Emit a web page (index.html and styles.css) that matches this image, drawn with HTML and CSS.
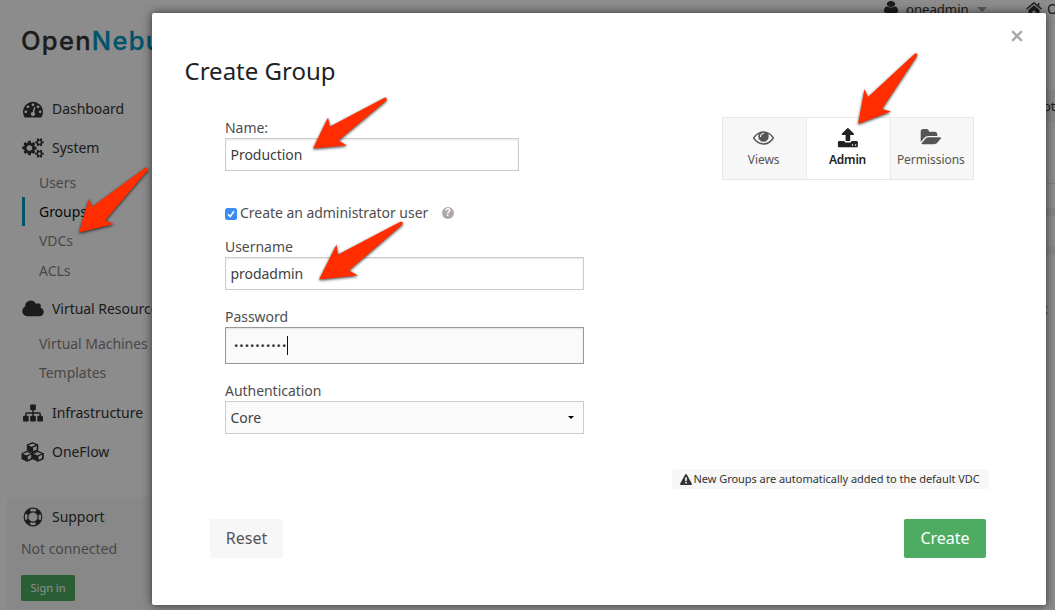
FILE: index.html
```html
<!DOCTYPE html>
<html lang="en">
<head>
<meta charset="utf-8">
<title>OpenNebula Sunstone</title>
<link rel="stylesheet" href="styles.css">
</head>
<body>
<div class="app">
  <aside class="sidebar">
    <div class="logo">Open<span class="logo-accent">Nebula</span></div>
    <nav class="nav">
      <a class="nav-item"><svg class="nav-icon" viewBox="0 0 1792 1792"><path d="M384 1152q0-53-37.5-90.5t-90.5-37.5-90.5 37.5-37.5 90.5 37.5 90.5 90.5 37.5 90.5-37.5 37.5-90.5zm192-448q0-53-37.5-90.5t-90.5-37.5-90.5 37.5-37.5 90.5 37.5 90.5 90.5 37.5 90.5-37.5 37.5-90.5zm428 481l101-382q6-26-7.5-48.5t-38.5-29.5-48 6.5-30 39.5l-101 382q-60 5-107 43.5t-63 98.5q-20 77 20 146t117 89 146-20 89-117q16-60-6-117t-72-91zm660-33q0-53-37.5-90.5t-90.5-37.5-90.5 37.5-37.5 90.5 37.5 90.5 90.5 37.5 90.5-37.5 37.5-90.5zm-640-640q0-53-37.5-90.5t-90.5-37.5-90.5 37.5-37.5 90.5 37.5 90.5 90.5 37.5 90.5-37.5 37.5-90.5zm448 192q0-53-37.5-90.5t-90.5-37.5-90.5 37.5-37.5 90.5 37.5 90.5 90.5 37.5 90.5-37.5 37.5-90.5zm320 448q0 261-141 483-19 29-54 29h-1402q-35 0-54-29-141-221-141-483 0-182 71-348t191-286 286-191 348-71 348 71 286 191 191 286 71 348z"/></svg>Dashboard</a>
      <a class="nav-item"><svg class="nav-icon" viewBox="0 0 1920 1792"><path d="M896 896q0-106-75-181t-181-75-181 75-75 181 75 181 181 75 181-75 75-181zm768 512q0-52-38-90t-90-38-90 38-38 90q0 53 37.5 90.5t90.5 37.5 90.5-37.5 37.5-90.5zm0-1024q0-52-38-90t-90-38-90 38-38 90q0 53 37.5 90.5t90.5 37.5 90.5-37.5 37.5-90.5zm-384 421v185q0 10-7 19.5t-16 10.5l-155 24q-11 35-32 76 34 48 90 115 7 11 7 20 0 12-7 19-23 30-82.5 89.5t-78.5 59.5q-11 0-21-7l-115-90q-37 19-77 31-11 108-23 155-7 24-30 24h-186q-11 0-20-7.5t-10-17.5l-23-153q-34-10-75-31l-118 89q-7 7-20 7-11 0-21-8-144-133-144-160 0-9 7-19 10-14 41-53t47-61q-23-44-35-82l-152-24q-10-1-17-9.5t-7-19.5v-185q0-10 7-19.5t16-10.5l155-24q11-35 32-76-34-48-90-115-7-11-7-20 0-12 7-20 22-30 82-89t79-59q11 0 21 7l115 90q34-18 77-32 11-108 23-154 7-24 30-24h186q11 0 20 7.5t10 17.5l23 153q34 10 75 31l118-89q8-7 20-7 11 0 21 8 144 133 144 160 0 8-7 19-12 16-42 54t-45 60q23 48 34 82l152 23q10 2 17 10.5t7 19.5zm640 533v140q0 16-149 31-12 27-30 52 51 113 51 138 0 4-4 7-122 71-124 71-8 0-46-47t-52-68q-20 2-30 2t-30-2q-14 21-52 68t-46 47q-2 0-124-71-4-3-4-7 0-25 51-138-18-25-30-52-149-15-149-31v-140q0-16 149-31 13-29 30-52-51-113-51-138 0-4 4-7 4-2 35-20t59-34 30-16q8 0 46 46.5t52 67.5q20-2 30-2t30 2q51-71 92-112l6-2q4 0 124 70 4 3 4 7 0 25-51 138 17 23 30 52 149 15 149 31zm0-1024v140q0 16-149 31-12 27-30 52 51 113 51 138 0 4-4 7-122 71-124 71-8 0-46-47t-52-68q-20 2-30 2t-30-2q-14 21-52 68t-46 47q-2 0-124-71-4-3-4-7 0-25 51-138-18-25-30-52-149-15-149-31v-140q0-16 149-31 13-29 30-52-51-113-51-138 0-4 4-7 4-2 35-20t59-34 30-16q8 0 46 46.5t52 67.5q20-2 30-2t30 2q51-71 92-112l6-2q4 0 124 70 4 3 4 7 0 25-51 138 17 23 30 52 149 15 149 31z"/></svg>System</a>
      <div class="subnav">
        <a class="sub-item">Users</a>
        <a class="sub-item active">Groups</a>
        <a class="sub-item">VDCs</a>
        <a class="sub-item">ACLs</a>
      </div>
      <a class="nav-item"><svg class="nav-icon" viewBox="64 0 1920 1792"><path d="M1984 1152q0 159-112.5 271.5t-271.5 112.5h-1088q-185 0-316.5-131.5t-131.5-316.5q0-132 71-241.5t187-163.5q-2-28-2-43 0-212 150-362t362-150q158 0 286.5 88t187.5 230q70-62 166-62 106 0 181 75t75 181q0 75-41 138 129 30 213 134.5t84 239.5z"/></svg>Virtual Resources</a>
      <div class="subnav last">
        <a class="sub-item">Virtual Machines</a>
        <a class="sub-item">Templates</a>
      </div>
      <a class="nav-item"><svg class="nav-icon" viewBox="0 0 1792 1792"><path d="M1792 1248v320q0 40-28 68t-68 28h-320q-40 0-68-28t-28-68v-320q0-40 28-68t68-28h96v-192h-512v192h96q40 0 68 28t28 68v320q0 40-28 68t-68 28h-320q-40 0-68-28t-28-68v-320q0-40 28-68t68-28h96v-192h-512v192h96q40 0 68 28t28 68v320q0 40-28 68t-68 28h-320q-40 0-68-28t-28-68v-320q0-40 28-68t68-28h96v-192q0-52 38-90t90-38h512v-192h-96q-40 0-68-28t-28-68v-320q0-40 28-68t68-28h320q40 0 68 28t28 68v320q0 40-28 68t-68 28h-96v192h512q52 0 90 38t38 90v192h96q40 0 68 28t28 68z"/></svg>Infrastructure</a>
      <a class="nav-item"><svg class="nav-icon cubes" viewBox="0 0 23 20"><g id="cube"><path d="M11.500 .8l5 2.100v5.100l-5 2.400-5-2.400V2.900z" class="cube-face"/><path d="M11.500 5.200l5-2.300v5.100l-5 2.400z" class="cube-face"/><path d="M6.500 2.900l5 2.300v5l-5-2.200z"/></g><use href="#cube" x="-5.400" y="8.600"/><use href="#cube" x="5.400" y="8.600"/></svg>OneFlow</a>
    </nav>
    <section class="support">
      <a class="nav-item"><svg class="nav-icon" viewBox="0 0 20 20"><circle cx="10" cy="10" r="8.800" class="ring"/><circle cx="10" cy="10" r="5.200" class="ring"/><circle cx="10" cy="10" r="7" class="ring-fill"/></svg>Support</a>
      <p class="support-status">Not connected</p>
      <button class="signin">Sign in</button>
    </section>
  </aside>
  <main class="content">
    <header class="topbar">
      <svg class="user-icon" viewBox="256 128 1280 1536" preserveAspectRatio="none"><path d="M1536 1399q0 109-62.500 187t-150.500 78h-854q-88 0-150.500-78t-62.500-187q0-85 8.500-160.500t31.500-152 58.500-131 94-89 134.500-34.500q131 128 313 128t313-128q76 0 134.500 34.500t94 89 58.500 131 31.500 152 8.500 160.500zm-256-887q0 159-112.500 271.500t-271.500 112.500-271.500-112.500-112.500-271.500 112.500-271.500 271.500-112.500 271.500 112.500 112.500 271.500z"/></svg>
      <span class="user-name">oneadmin</span>
      <span class="user-caret"></span>
      <svg class="home-icon" viewBox="0 0 16 13"><path d="M8 3.300l5.500 4.700v4.300h-4V8.800h-3v3.500h-4V8z"/><path d="M.6 7L8 .9 15.400 7M12.600 1v3" class="roof"/></svg>
      <span>O</span>
    </header>
    <div class="table-head">ot</div>
    <div class="rule"></div>
    <div class="band"></div>
    <div class="band"></div>
    <div class="more">:</div>
  </main>
</div>
<div class="scrim"></div>

<div class="modal">
  <svg class="close" viewBox="0 0 12 12"><path d="M1.200 1.200l9.600 9.600M10.800 1.200L1.200 10.800"/></svg>
  <h1 class="title">Create Group</h1>
  <div class="top-row">
    <label class="field name-field">Name:<input type="text" value="Production"></label>
    <div class="tabs">
      <a class="tab"><svg viewBox="0 128 1792 1664"><path d="M1664 960q-152-236-381-353 61 104 61 225 0 185-131.500 316.500t-316.500 131.500-316.500-131.500-131.500-316.500q0-121 61-225-229 117-381 353 133 205 333.500 326.500t434.500 121.500 434.500-121.500 333.500-326.500zm-720-384q0-20-14-34t-34-14q-125 0-214.500 89.500t-89.500 214.500q0 20 14 34t34 14 34-14 14-34q0-86 61-147t147-61q20 0 34-14t14-34zm848 384q0 34-20 69-140 230-376.500 368.500t-499.500 138.500-499.500-139-376.500-368q-20-35-20-69t20-69q140-229 376.500-368t499.500-139 499.500 139 376.500 368q20 35 20 69z"/></svg>Views</a>
      <a class="tab current"><svg viewBox="0 64 1728 1664"><path d="M1344 1472q0-26-19-45t-45-19-45 19-19 45 19 45 45 19 45-19 19-45zm256 0q0-26-19-45t-45-19-45 19-19 45 19 45 45 19 45-19 19-45zm128-224v320q0 40-28 68t-68 28h-1472q-40 0-68-28t-28-68v-320q0-40 28-68t68-28h427q21 56 70.500 92t110.500 36h256q61 0 110.500-36t70.500-92h427q40 0 68 28t28 68zm-325-648q-17 40-59 40h-256v448q0 26-19 45t-45 19h-256q-26 0-45-19t-19-45v-448h-256q-42 0-59-40-17-39 14-69l448-448q18-19 45-19t45 19l448 448q31 30 14 69z"/></svg>Admin</a>
      <a class="tab"><svg viewBox="0 128 1943 1664"><path d="M1943 952q0 31-31 66l-336 396q-43 51-120.500 86.500t-143.500 35.500h-1088q-34 0-60.500-13t-26.500-43q0-31 31-66l336-396q43-51 120.500-86.500t143.500-35.500h1088q34 0 60.500 13t26.500 43zm-343-344v160h-832q-94 0-197 47.500t-164 119.500l-337 396-5 6q0-4-.5-12.500t-.5-12.500v-960q0-92 66-158t158-66h320q92 0 158 66t66 158v32h544q92 0 158 66t66 158z"/></svg>Permissions</a>
    </div>
  </div>
  <div class="form">
    <div class="check-row">
      <svg class="checkbox" viewBox="0 0 12 12"><rect width="12" height="12" rx="2.500"/><path d="M3 6.200l2.200 2.400L9 3.200"/></svg>
      <span>Create an administrator user</span><span class="help">?</span>
    </div>
    <label class="field">Username<input type="text" value="prodadmin"></label>
    <div class="field password">Password<div class="password-box"><span>••••••••••</span><i class="text-caret"></i></div></div>
    <div class="field auth">Authentication<div class="select">Core<span class="select-caret"></span></div></div>
  </div>
  <div class="notice"><svg viewBox="0 0 12 11"><path fill-rule="evenodd" d="M5.200.6q.8-1 1.600 0l5 9q.4 1.200-.8 1.300H1q-1.200-.1-.8-1.300zM5 3.400l.3 3.800h1.400L7 3.400zm.2 4.600v1.500h1.600V8z"/></svg>New Groups are automatically added to the default VDC</div>
  <div class="actions">
    <button class="btn">Reset</button>
    <button class="btn primary">Create</button>
  </div>
</div>

<svg class="arrows" viewBox="0 0 1055 610">
  <path d="M79 232.500L89 198.500 92 207 145 168Q148 166.500 148 170L105 220.500 114 224z"/>
  <path d="M313 148.500L328 117.500 330 126.500 384 98Q387.500 96.500 386.500 100.500L338.500 140.500 347 145.500z"/>
  <path d="M858 124L864.500 89 868 97 914.500 54Q917.500 52 917 56L882 109 891 111.500z"/>
  <path d="M319 279.500L336.500 244.500 338 254.500 400 222Q403.500 221 402.500 224.500L349 270.500 358 275.500z"/>
</svg>
</body>
</html>
```

FILE: styles.css
```css
* { box-sizing: border-box; }
body { margin: 0; width: 1055px; height: 610px; overflow: hidden; position: relative; background: #fff; color: #333; font: 14px/20px "Noto Sans", "Open Sans", sans-serif; letter-spacing: -.04px; }
svg { display: block; fill: currentColor; }
button { border: 0; font-family: inherit; }
p { margin: 0; }

.app { display: flex; height: 610px; overflow: hidden; }
.sidebar { width: 199px; flex: none; display: flex; flex-direction: column; white-space: nowrap; padding-left: 7px; }
.logo { height: 89px; padding: 24px 0 0 14px; font: 500 25.500px/34px Inter, sans-serif; letter-spacing: 1.300px; color: #333; -webkit-text-stroke: .3px currentColor; }
.logo-accent { color: #0098c3; }
.nav { display: flex; flex-direction: column; height: 408px; }
.nav-item { display: flex; align-items: center; height: 39px; gap: 8px; padding-left: 15px; }
.nav-icon { width: 22px; height: 20px; }
.cubes { width: 23px; height: 20px; margin: 0 0 0 -1px; }
.cube-face { fill: none; stroke: currentColor; stroke-width: 1.300; stroke-linejoin: round; }
.subnav { display: flex; flex-direction: column; padding: .5px 0 4.500px 15px; }
.subnav.last { padding-bottom: 5.500px; }
.sub-item { height: 29.400px; padding-left: 14px; border-left: 3px solid transparent; line-height: 30px; color: #848484; }
.sub-item.active { color: #111; border-color: #0098c3; }
.support { flex: 1; background: #f8f8f8; }
.support .nav-item { height: 40px; }
.support-status { padding-left: 14px; line-height: 24px; color: #848484; }
.signin { display: block; margin: 14px 0 0 14px; width: 54px; height: 26px; padding: 0; border-radius: 2px; background: #4dac62; color: #fff; font-size: 11px; line-height: 26px; }
.ring { fill: none; stroke: currentColor; stroke-width: 1.200; }
.ring-fill { fill: none; stroke: currentColor; stroke-width: 3.600; stroke-dasharray: 5.500; stroke-dashoffset: -2.750; }

.content { flex: 1; display: flex; flex-direction: column; align-items: stretch; overflow: hidden; }
.topbar { display: flex; align-items: center; height: 17px; padding-left: 685px; white-space: nowrap; flex: none; }
.user-icon { width: 14px; height: 12px; margin-right: 8px; flex: none; margin-bottom: 4px; }
.user-name { width: 71px; flex: none; font-size: 13.200px; }
.user-caret { border: 5px solid transparent; border-top-color: #a0a0a0; border-bottom: 0; margin: 2px 39px 0 0; }
.home-icon { width: 16px; height: 13px; margin-right: 5px; flex: none; margin-bottom: 1px; }
.roof { fill: none; stroke: currentColor; stroke-width: 1.500; }
.table-head { margin-top: 73px; height: 33px; background: #f5f5f5; line-height: 33px; padding-left: 844px; flex: none; font-size: 13px; }
.rule { margin-top: 60px; height: 1px; background: #e4e4e4; flex: none; }
.band { margin-top: 24px; height: 8px; background: #f0f0f0; flex: none; }
.band + .band { margin-top: 30px; }
.more { margin-top: 45px; padding-left: 845px; }
.scrim { position: absolute; inset: 0; background: rgba(0, 0, 0, .45); }

.modal { position: absolute; left: 152px; top: 13px; width: 894px; height: 592px; border-radius: 2px; background: #fff; box-shadow: 0 0 10px rgba(0, 0, 0, .65); padding-top: 42px; color: #4d4d4d; }
.close { position: absolute; left: 859px; top: 17px; width: 12px; height: 12px; fill: none; stroke: #aaa; stroke-width: 2.600; }
.title { margin: 0 0 0 32.500px; font-size: 24px; line-height: 32px; font-weight: 400; color: #222; letter-spacing: 0; }
.top-row { display: flex; justify-content: space-between; padding: 30px 72px 0 73px; height: 93px; }
.field { display: flex; flex-direction: column; line-height: 20px; }
.name-field { width: 294px; padding-top: 1px; }
.field input { width: 100%; height: 33px; border: 1px solid #ccc; border-radius: 0; padding: 0 4.500px; font: inherit; letter-spacing: inherit; color: #404040; background: #fff; box-shadow: inset 0 1px 2px rgba(0, 0, 0, .1); outline: 0; flex: none; }
.tabs { display: flex; width: 252px; height: 63px; border: 1px solid #e8e8e8; }
.tab { width: 84px; display: flex; flex-direction: column; align-items: center; padding: 10px 2px 0 0; background: #f7f7f7; font-size: 12px; line-height: 24px; color: #555; white-space: nowrap; }
.tab + .tab { border-left: 1px solid #ececec; }
.tab svg { width: 21px; height: 20px; flex: none; }
.tab.current { background: #fff; color: #222; font-weight: 600; letter-spacing: -.2px; }
.form { padding: 23px 0 0 73px; width: 432px; }
.check-row { display: flex; align-items: center; height: 20px; margin-bottom: 14px; white-space: nowrap; }
.checkbox { width: 12px; height: 12px; margin: 2px 3px 0 0; fill: #3b8df5; }
.checkbox path { fill: none; stroke: #fff; stroke-width: 1.600; }
.help { width: 12px; height: 12px; margin-left: 13.500px; border-radius: 50%; background: #aaa; color: #fff; font: 700 10px/12px "Liberation Sans", sans-serif; text-align: center; }
.password { margin-top: 17px; }
.password-box { display: flex; align-items: center; height: 37px; border: 1px solid #999; background: #fafafa; box-shadow: inset 0 1px 2px rgba(0, 0, 0, .1); padding-left: 8px; color: #333; }
.password-box span { font-size: 11.500px; letter-spacing: 1px; }
.text-caret { width: 1px; height: 19px; background: #111; }
.auth { margin-top: 17px; }
.select { display: flex; align-items: center; justify-content: space-between; height: 33px; border: 1px solid #ccc; background: #fafafa; padding: 0 9px 0 4.500px; color: #404040; }
.select-caret { border: 3px solid transparent; border-top-color: #000; border-bottom: 0; }
.notice { display: flex; align-items: center; gap: 2px; width: 317px; height: 20px; margin: 35px 0 0 520px; padding-left: 7.500px; border-radius: 2px; background: #f7f7f7; font-size: 11px; white-space: nowrap; color: #333; }
.notice svg { width: 12px; height: 11px; }
.actions { display: flex; justify-content: space-between; margin: 30px 60px 0 58px; }
.btn { width: 73px; height: 39px; padding: 0 0 2px; border-radius: 2px; background: #f7f7f7; color: #555; font-size: 16px; }
.btn.primary { width: 82px; background: #4dac62; color: #fff; }
.arrows { position: absolute; inset: 0; width: 1055px; height: 610px; fill: #ff2d00; filter: drop-shadow(0 1px 1.500px rgba(0, 0, 0, .75)); }
```
